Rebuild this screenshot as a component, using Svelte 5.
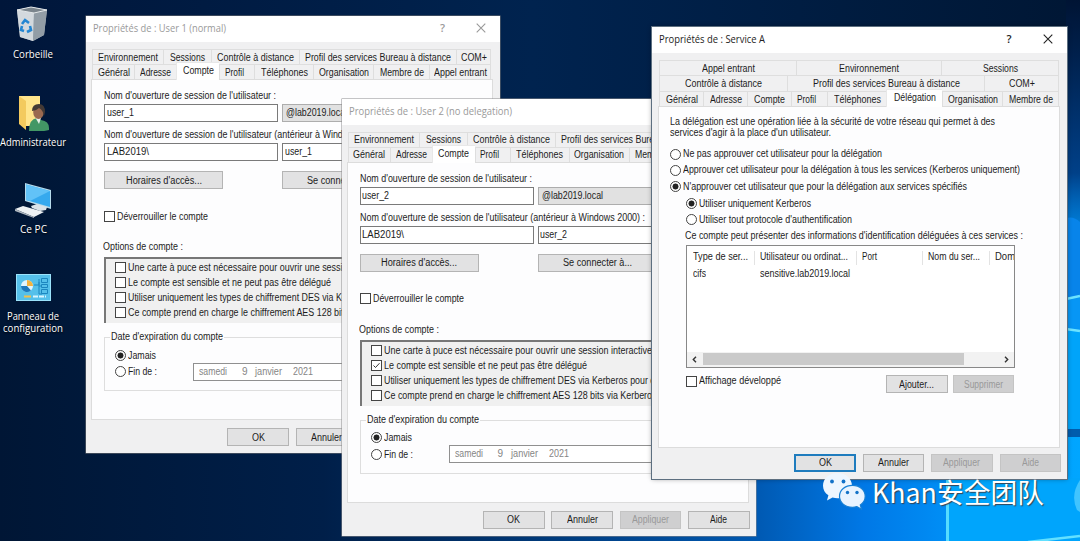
<script>
  const userTabs = [
    [
      ['Environnement', 71, 60], ['Sessions', 48, 35], ['Contrôle à distance', 88, 77],
      ['Profil des services Bureau à distance', 157, 146], ['COM+', 35, 26]
    ],
    [
      ['Général', 42, 32], ['Adresse', 42, 31], ['Compte', 43, 31], ['Profil', 35, 19],
      ['Téléphones', 59, 47], ['Organisation', 60, 50], ['Membre de', 56, 44], ['Appel entrant', 62, 53]
    ]
  ];
  const serviceTabs = [
    [['Appel entrant', 137, 53], ['Environnement', 145, 60], ['Sessions', 118, 35]],
    [['Contrôle à distance', 128, 77], ['Profil des services Bureau à distance', 197, 147], ['COM+', 75, 26]],
    [
      ['Général', 44, 32], ['Adresse', 44, 32], ['Compte', 44, 31], ['Profil', 36, 19],
      ['Téléphones', 59, 47], ['Délégation', 56, 42], ['Organisation', 60, 50], ['Membre de', 57, 44]
    ]
  ];
  const options = [
    ['Une carte à puce est nécessaire pour ouvrir une session interactive', 268],
    ['Le compte est sensible et ne peut pas être délégué', 203],
    ['Utiliser uniquement les types de chiffrement DES via Kerberos pour ce compte', 307],
    ['Ce compte prend en charge le chiffrement AES 128 bits via Kerberos.', 275]
  ];
  const users = [
    { cls: 'one', title: 'Propriétés de : User 1 (normal)', w: 133, login: 'user_1', checked: -1 },
    { cls: 'two', title: 'Propriétés de : User 2 (no delegation)', w: 163, login: 'user_2', checked: 1 }
  ];

  // Condenses or widens a label so that it takes exactly the given width.
  function fit(node, width) {
    if (!width) return;
    const natural = node.getBoundingClientRect().width;
    node.style.width = width + 'px';
    node.style.transform = `scaleX(${(width / natural).toFixed(4)})`;
  }
</script>

{#snippet t(text, w)}<span class="t" use:fit={w}>{text}</span>{/snippet}

{#snippet titlebar(title, w)}
  <header class="title">
    <span class="name">{@render t(title, w)}</span>
    <span class="help">?</span>
    <svg class="close" viewBox="0 0 10 10" width="10" height="10"><path d="M.7.7l8.6 8.6M9.3.7L.7 9.3" /></svg>
  </header>
{/snippet}

{#snippet tabs(rows, active)}
  <nav class="tabs">
    {#each rows as row}
      <div class="tabrow">
        {#each row as [label, width, w]}
          <div class="tab" class:active={label === active} class:short={label === 'Profil'} style="width:{width}px">{@render t(label, w)}</div>
        {/each}
      </div>
    {/each}
  </nav>
{/snippet}

{#snippet radio(label, w, on)}
  <div class="choice"><span class="radio" class:on></span>{@render t(label, w)}</div>
{/snippet}

{#snippet check(label, w, on)}
  <div class="choice">
    <span class="check">
      {#if on}<svg viewBox="0 0 9 9" width="9" height="9"><path d="M1.5 4.5l2 2 4-4.3" /></svg>{/if}
    </span>{@render t(label, w)}
  </div>
{/snippet}

<div class="desktop">
  <svg class="wall" viewBox="0 0 1080 541" width="1080" height="541">
    <defs>
      <linearGradient id="base" x1="0" x2="1" y1="0" y2="0">
        <stop offset="0" stop-color="#001635" /><stop offset=".3" stop-color="#001f49" />
        <stop offset=".48" stop-color="#003674" /><stop offset=".7" stop-color="#0059b2" />
        <stop offset=".8" stop-color="#0078e6" /><stop offset=".9" stop-color="#0095fa" /><stop offset="1" stop-color="#00a6ff" />
      </linearGradient>
      <linearGradient id="night" x1="0" x2="0" y1="0" y2="1">
        <stop offset="0" stop-color="#001434" /><stop offset=".1" stop-color="#00204c" />
        <stop offset=".32" stop-color="#003b82" stop-opacity=".95" /><stop offset=".42" stop-color="#0062bd" stop-opacity=".6" />
        <stop offset=".55" stop-color="#007be0" stop-opacity=".1" /><stop offset=".6" stop-color="#007be0" stop-opacity="0" />
      </linearGradient>
      <linearGradient id="top" x1="0" x2="1" y1="0" y2="0">
        <stop offset="0" stop-color="#00163a" /><stop offset=".5" stop-color="#00234f" /><stop offset="1" stop-color="#001735" />
      </linearGradient>
    </defs>
    <rect width="1080" height="541" fill="url(#base)" />
    <rect x="500" width="580" height="541" fill="url(#night)" />
    <rect x="0" width="1066" height="100" fill="url(#top)" />
    <path d="M1066 218q8-2 14 4v74l-14 3z" fill="#0884ea" />
    <path d="M1066 299l14-3v34l-14-1z" fill="#0796f5" />
    <path d="M1066 330l14 1v98h-14z" fill="#00a4fa" />
    <path d="M1066 299l14-3M1066 329l14 2" stroke="#6de3ff" stroke-width="2.5" />
    <path d="M1066 429h14v8h-14z" fill="#005cad" />
    <path d="M948 478h132v63H948z" fill="#00a5fc" />
    <path d="M1080 480q-10 15-3 30l3 2z" fill="#40c4ff" />
    <path d="M947.500 478v63" stroke="#56dcff" stroke-width="3" />
    <path d="M1028 542l52-6" stroke="#62e0ff" stroke-width="2.500" />
  </svg>

  <aside class="icons">
    <div class="icon bin">
      <svg viewBox="0 0 34 36" width="34" height="36">
        <path d="M1 4l14-3 16 3-3 25-11 6-13-4z" fill="#aeb8c0" />
        <path d="M1 4l17 3-1 28-13-4z" fill="#d3d9de" /><path d="M18 7l13-3-3 25-11 6z" fill="#929da6" />
        <path d="M1 4l14-3 16 3-13 3z" fill="#7b858d" stroke="#e4e8ea" stroke-width="1" />
        <g fill="none" stroke="#2386d2" stroke-width="2.600"><path d="M6 18l3-4 4 3M14 20l1 4-4 2M8 25l-3-1 1-4" /></g>
      </svg>
      <span class="cap">{@render t('Corbeille', 40)}</span>
    </div>
    <div class="icon admin">
      <svg viewBox="0 0 34 36" width="34" height="36">
        <path d="M3 1h21v30H8l-5-3z" fill="#ffe58c" /><path d="M3 1l7 5v29l-7-6z" fill="#f3ca5e" />
        <path d="M13 36q0-12 8-13l4 2q8 1 8 8v2q-6 2-20 1z" fill="#429765" />
        <path d="M19 22l4 7 2-6z" fill="#e5eee8" />
        <ellipse cx="22.500" cy="17" rx="5.300" ry="7" fill="#9a6a50" />
        <path d="M16 16q0-7 7-7 6 0 6 8l-1 4q-1-6-5-8-3 3-7 3z" fill="#433a35" />
      </svg>
      <span class="cap">{@render t('Administrateur', 66)}</span>
    </div>
    <div class="icon pc">
      <svg viewBox="0 0 38 36" width="38" height="36">
        <path d="M11 1l26 7v19l-26-8z" fill="#b6dbec" /><path d="M12 2.500l24 6.500v16L12 18z" fill="#36a9ee" />
        <path d="M12 2.500l24 6.500-20 10-4-1z" fill="#62c2f7" />
        <path d="M17 24l6-2 10 3-1 3-6 1-8-3z" fill="#dbe3e8" />
        <path d="M1 27l8-3 21 6-10 5z" fill="#edf1f3" /><path d="M1 27l19 8v1L1 29z" fill="#aeb7bf" />
      </svg>
      <span class="cap">{@render t('Ce PC', 27)}</span>
    </div>
    <div class="icon panel">
      <svg viewBox="0 0 35 27" width="35" height="27">
        <rect x=".5" y=".5" width="34" height="26" fill="#55c0ea" stroke="#9be3fb" />
        <circle cx="11" cy="12" r="6" fill="#dff5ff" /><path d="M11 12V6a6 6 0 0 1 6 6z" fill="#f3b340" /><path d="M11 12H5a6 6 0 0 0 10 4.500z" fill="#1d79bd" />
        <g fill="none" stroke="#1c86bf"><path d="M18 11h5V5M23 8v12h3M23 12h3" /><path d="M25.500 4.500h6v4h-6zM25.500 10.500h6v3h-6zM25.500 15.500h6v4h-6z" /></g>
        <path d="M8 22.500h7" stroke="#f2c14c" stroke-width="2" /><path d="M17 22.500h13" stroke="#d9f5ff" stroke-width="2" stroke-dasharray="5 1" />
      </svg>
      <span class="cap">{@render t('Panneau de', 52)}<br />{@render t('configuration', 60)}</span>
    </div>
  </aside>

  {#each users as u}
    <section class="window user {u.cls}">
      {@render titlebar(u.title, u.w)}
      {@render tabs(userTabs, 'Compte')}
      <div class="page">
        <div class="label">{@render t("Nom d'ouverture de session de l'utilisateur :", 172)}</div>
        <div class="fields">
          <div class="input">{@render t(u.login, 27)}</div>
          <div class="input combo">{@render t('@lab2019.local', 61)}</div>
        </div>
        <div class="label second">{@render t("Nom d'ouverture de session de l'utilisateur (antérieur à Windows 2000) :", 285)}</div>
        <div class="fields">
          <div class="input">{@render t('LAB2019\\', 42)}</div>
          <div class="input wide">{@render t(u.login, 27)}</div>
        </div>
        <div class="pair">
          <button>{@render t("Horaires d'accès...", 76)}</button>
          <button>{@render t('Se connecter à...', 69)}</button>
        </div>
        <div class="unlock">{@render check('Déverrouiller le compte', 91, false)}</div>
        <div class="label options">{@render t('Options de compte :', 80)}</div>
        <div class="box">
          {#each options as [label, w], i}{@render check(label, w, i === u.checked)}{/each}
        </div>
        <div class="group">
          <div class="legend">{@render t("Date d'expiration du compte", 112)}</div>
          {@render radio('Jamais', 28, true)}
          <div class="until">
            {@render radio('Fin de :', 29, false)}
            <div class="date"><i>{@render t('samedi', 28)}</i><i>9</i><i>{@render t('janvier', 27)}</i><i>{@render t('2021', 20)}</i></div>
          </div>
        </div>
      </div>
      <footer>
        <button>{@render t('OK', 13)}</button>
        <button>{@render t('Annuler', 31)}</button>
        <button class="off">{@render t('Appliquer', 37)}</button>
        <button>{@render t('Aide', 17)}</button>
      </footer>
    </section>
  {/each}

  <section class="window service">
    {@render titlebar('Propriétés de : Service A', 106)}
    {@render tabs(serviceTabs, 'Délégation')}
    <div class="page">
      <p>{@render t('La délégation est une opération liée à la sécurité de votre réseau qui permet à des', 325)}</p>
      <p>{@render t("services d'agir à la place d'un utilisateur.", 161)}</p>
      <div class="radios">
        {@render radio('Ne pas approuver cet utilisateur pour la délégation', 199, false)}
        {@render radio('Approuver cet utilisateur pour la délégation à tous les services (Kerberos uniquement)', 337, false)}
        {@render radio("N'approuver cet utilisateur que pour la délégation aux services spécifiés", 284, true)}
      </div>
      <div class="sub">
        {@render radio('Utiliser uniquement Kerberos', 112, true)}
        {@render radio("Utiliser tout protocole d'authentification", 153, false)}
        <div class="label">{@render t("Ce compte peut présenter des informations d'identification déléguées à ces services :", 338)}</div>
        <div class="list">
          <div class="head">
            <span>{@render t('Type de ser...', 55)}</span><span>{@render t('Utilisateur ou ordinat...', 88)}</span><span>{@render t('Port', 15)}</span><span>{@render t('Nom du ser...', 52)}</span><span>{@render t('Domaine', 38)}</span>
          </div>
          <div class="row"><span>{@render t('cifs', 13)}</span><span>{@render t('sensitive.lab2019.local', 90)}</span></div>
          <div class="scroll">
            <svg viewBox="0 0 5 7" width="5" height="7"><path d="M4 .8L1.300 3.500 4 6.200" /></svg>
            <div class="track"><div class="thumb"></div></div>
            <svg viewBox="0 0 5 7" width="5" height="7"><path d="M1 .8l2.700 2.700L1 6.200" /></svg>
          </div>
        </div>
        <div class="actions">
          {@render check('Affichage développé', 82, false)}
          <button>{@render t('Ajouter...', 35)}</button>
          <button class="off">{@render t('Supprimer', 39)}</button>
        </div>
      </div>
    </div>
    <footer>
      <button class="primary">{@render t('OK', 13)}</button>
      <button>{@render t('Annuler', 31)}</button>
      <button class="off">{@render t('Appliquer', 37)}</button>
      <button class="off">{@render t('Aide', 17)}</button>
    </footer>
  </section>

  <div class="mark">
    <svg viewBox="0 0 44 37" width="44" height="37">
      <path d="M15.500 0C7 0 1 5.500 1 12.800c0 4 2 7.300 5.400 9.500L5 27.500l5.500-3q2.500.8 5 .8C24 25.300 30 20 30 12.900S24 0 15.500 0z" fill="#edf6ff" />
      <path d="M30.500 12.300c-7.500 0-13 4.800-13 11s5.500 11 13 11q2.200 0 4.400-.7l4.600 2.600-1.200-4.200c3-2 4.900-5 4.900-8.700 0-6.200-5.400-11-12.700-11z" fill="#e8f3ff" stroke="#1880d5" stroke-width="1.200" />
      <g fill="#1372c8"><circle cx="10" cy="8.500" r="1.900" /><circle cx="21.500" cy="8.500" r="1.900" /><circle cx="25.500" cy="19.500" r="1.700" /><circle cx="35" cy="19.500" r="1.700" /></g>
    </svg>
    <span>{@render t('Khan安全团队', 172)}</span>
  </div>
</div>

<style>
  :global(body) { margin: 0; overflow: hidden; }
  .desktop { position: relative; width: 1080px; height: 541px; overflow: hidden; font: 10px/12px "Liberation Sans", Arial, sans-serif; color: #1c1c1c; }
  .desktop * { box-sizing: border-box; }
  .t { display: inline-block; white-space: pre; transform-origin: 0 50%; text-align: left; }
  .wall { display: block; }

  .icons { position: absolute; left: -4px; top: 6px; width: 74px; height: 335px; font: 10px/12px "Open Sans", sans-serif; color: #fff; display: flex; flex-direction: column; }
  .icon { display: flex; flex-direction: column; align-items: center; height: 88px; text-align: center; text-shadow: 0 1px 2px #000; flex: none; }
  .icon svg { display: block; }
  .cap { margin-top: 6px; }
  .admin .cap, .pc .cap { margin-top: 5px; }
  .admin { padding-top: 1px; }
  .pc { height: 92px; padding-top: 0; }
  .panel .cap { margin-top: 9px; }

  .window { position: absolute; display: flex; flex-direction: column; background: #f0f0f1; box-shadow: 0 0 0 .5px #777; }
  .user { width: 414px; height: 437px; }
  .one { left: 86px; top: 16px; }
  .two { left: 341.500px; top: 98.500px; box-shadow: 0 0 0 .5px #8b8b8d; }
  .service { left: 652px; top: 27px; width: 414.500px; height: 451.500px; box-shadow: 0 0 0 1px #5d6f80, 0 0 5px #0006; }

  .title { height: 26px; background: #fff; display: flex; align-items: center; padding: 0 14px 2px 7px; flex: none; font: 10px/12px "Open Sans", sans-serif; color: #9a9a9a; }
  .name { flex: 1; }
  .help { font-size: 11px; font-weight: 600; margin-right: 31px; }
  .close path { stroke: #999; fill: none; stroke-width: 1.100; }
  .service .title { color: #222; }
  .service .close path { stroke: #222; }

  .tabs { margin: 7px 7px 0 6px; flex: none; }
  .service .tabs { margin: 7px 8px 0 7px; }
  .tabrow { display: flex; height: 15px; }
  .service .tabrow { height: 15.330px; }
  .tab { flex: none; border-left: 1px solid #dedede; border-top: 1px solid #dedede; display: flex; justify-content: center; align-items: center; padding-top: 1.500px; }
  .tabrow .tab:last-child { border-right: 1px solid #dedede; }
  .tab.short { padding-right: 6px; }
  .tab.active { background: #fff; height: 18px; margin-top: -2px; padding-bottom: 2px; border-color: #e8e8e8; z-index: 1; }

  .page { background: #fdfdfe; border: 1px solid #dcdcdc; margin: 0 7px 0 5px; flex: none; }
  .user .page { height: 341px; padding: 10px 0 0 12px; }
  .label { height: 12px; white-space: nowrap; }
  .second { margin-top: 7px; }
  .options { margin-top: 19px; margin-left: -1px; }
  .fields { display: flex; gap: 4px; margin-top: 2px; }
  .input { width: 174px; height: 18px; border: 1px solid #7a7a7a; background: #fff; padding: 2px 1.500px; }
  .combo { background: #e1e1e1; border-color: #adadad; padding-left: 3px; width: 190px; }
  .wide { width: 190px; }
  button { font: inherit; color: inherit; margin: 0; padding: 1px 0 0; border: 1px solid #b4b4b4; background: #e2e2e3; height: 18px; border-radius: 0; flex: none; }
  .pair { display: flex; gap: 59px; margin-top: 10px; }
  .pair button { width: 119px; }
  .choice { display: flex; align-items: center; white-space: nowrap; height: 12px; gap: 2px; }
  .check { width: 11px; height: 11px; border: 1px solid #444; background: #fff; flex: none; }
  .check svg { display: block; }
  .check path { fill: none; stroke: #333; stroke-width: 1; }
  .radio { width: 11px; height: 11px; border: 1px solid #444; border-radius: 50%; background: #fff; flex: none; }
  .radio.on { background: radial-gradient(circle at center, #222 0 2.700px, #fff 3.300px); }
  .unlock { margin-top: 21px; }
  .unlock .t, .box .t, .group .t { margin-top: 1px; }
  .box { margin-top: 4px; height: 66px; width: 375px; background: #f0f0f0; border-top: 2px solid #777; border-left: 2px solid #777; padding: 1px 0 0 9px; overflow: hidden; }
  .box .choice { height: 15px; }
  .group { margin-top: 14px; width: 375px; height: 54px; border: 1px solid #dedede; padding-left: 10px; }
  .legend { width: 114px; margin: -7px 0 6px -5px; padding-left: 1px; background: #fdfdfe; height: 12px; white-space: nowrap; }
  .legend .t, .date .t { margin-top: 0; }
  .until { display: flex; align-items: center; margin-top: 1px; height: 19px; }
  .until .choice { width: 78px; }
  .date { display: flex; width: 275px; height: 18px; border: 1px solid #909090; background: #fff; color: #858585; padding: 2px 5px; }
  i { font-style: normal; }
  .date i:nth-child(1) { width: 43px; }
  .date i:nth-child(2) { width: 13px; }
  .date i:nth-child(3) { width: 38px; }

  footer { display: flex; justify-content: flex-end; gap: 6.700px; padding: 8px 5.800px 0 0; }
  footer button { width: 61.700px; }
  .off { background: #cfcfd0; border-color: #c4c4c4; color: #999; }
  .primary { border: 2px solid #1f7cbe; padding-top: 0; }

  .service .page { height: 342px; padding: 9px 0 0 11px; margin-left: 6px; }
  .service footer { padding-top: 6px; padding-right: 5.300px; }
  p { margin: 0; height: 11px; line-height: 12px; white-space: nowrap; }
  .radios { margin-top: 8px; }
  .radios .choice, .sub > .choice { height: 16.300px; }
  .sub { margin-left: 16px; margin-top: .5px; }
  .sub .label { margin-top: 2.500px; margin-left: -1px; }
  .list { margin-top: 2.500px; width: 329px; height: 123px; border: 1px solid #888; background: #fff; display: flex; flex-direction: column; overflow: hidden; }
  .head, .row { display: flex; flex: none; white-space: nowrap; }
  .head { height: 18px; padding-top: 5px; line-height: 12px; }
  .row { height: 18px; padding-top: 4px; }
  .head > span, .row > span { flex: none; }
  .head > span { border-right: 1px solid #e3e3e3; padding-left: 5px; height: 14px; }
  .head > span:nth-child(1), .row > span:nth-child(1) { width: 68px; padding-left: 6px; }
  .head > span:nth-child(2) { width: 102px; }
  .row > span:nth-child(2) { padding-left: 5px; }
  .head > span:nth-child(3) { width: 66px; }
  .head > span:nth-child(4) { width: 67px; }
  .head > span:nth-child(5) { border: 0; }
  .scroll { margin-top: auto; height: 15px; padding: 0 5px; display: flex; align-items: center; gap: 6px; background: #f2f2f2; flex: none; }
  .scroll path { fill: none; stroke: #333; stroke-width: 1.400; }
  .track { flex: 1; height: 12px; }
  .thumb { width: 261px; height: 12px; background: #cacaca; }
  .actions { display: flex; margin-top: 7.500px; gap: 5px; height: 18px; }
  .actions .choice { width: 195px; }
  .actions button { width: 61.500px; }

  .mark { position: absolute; left: 822px; top: 473px; display: flex; align-items: center; gap: 6px; color: #fff; font: 27px/37px "Noto Sans CJK SC", sans-serif; text-shadow: 1px 1px 1px #345; white-space: nowrap; }
  .mark svg { display: block; }
</style>
